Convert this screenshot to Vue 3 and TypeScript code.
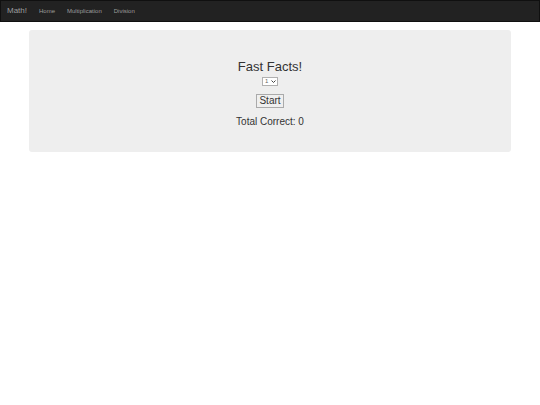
<script setup lang="ts">
import { ref } from 'vue'

const links: string[] = ['Home', 'Multiplication', 'Division']
const numbers: number[] = Array.from({ length: 12 }, (_, i) => i + 1)

const selected = ref<number>(1)
const totalCorrect = ref<number>(0)

function start(): void {
  totalCorrect.value = 0
}
</script>

<template>
  <nav class="navbar">
    <a class="brand" href="#">Math!</a>
    <ul class="links">
      <li v-for="link in links" :key="link">
        <a href="#">{{ link }}</a>
      </li>
    </ul>
  </nav>
  <main class="container">
    <section class="jumbotron">
      <h1 class="title">Fast Facts!</h1>
      <div class="picker">
        <select v-model="selected" aria-label="Number">
          <option v-for="n in numbers" :key="n" :value="n">{{ n }}</option>
        </select>
        <svg class="chevron" viewBox="0 0 10 6" aria-hidden="true">
          <path d="M1 1l4 4 4-4" fill="none" stroke="#444" stroke-width="2" />
        </svg>
      </div>
      <button class="start" type="button" @click="start">Start</button>
      <p class="score">Total Correct: {{ totalCorrect }}</p>
    </section>
  </main>
</template>

<style>
body {
  margin: 0;
  background: #fff;
}
</style>

<style scoped>
.navbar,
.container {
  font-family: "Liberation Sans", Arial, sans-serif;
  box-sizing: border-box;
}

.navbar {
  display: flex;
  align-items: center;
  gap: 12px;
  height: 22px;
  padding: 0 6px;
  background: #222;
  border: 1px solid #101010;
}

.navbar a {
  color: #9d9d9d;
  text-decoration: none;
}

.brand {
  font-size: 8px;
  line-height: 10px;
}

.links {
  display: flex;
  gap: 12px;
  margin: 0;
  padding: 0;
  list-style: none;
  font-size: 6px;
  line-height: 10px;
}

.links li {
  display: flex;
}

.container {
  padding: 8px 29px;
}

.jumbotron {
  display: flex;
  flex-direction: column;
  align-items: center;
  padding: 29px 24px 24px;
  background: #eee;
  border-radius: 3px;
  color: #333;
}

.title {
  margin: 0 0 3px;
  font-size: 13px;
  font-weight: 400;
  line-height: 15px;
}

.picker {
  position: relative;
  display: flex;
  margin-bottom: 8px;
}

.picker select {
  appearance: none;
  box-sizing: border-box;
  width: 16px;
  height: 9px;
  margin: 0;
  padding: 0 0 0 2px;
  background: #fff;
  border: 1px solid #b0b0b0;
  border-radius: 0;
  color: #666;
  font-family: inherit;
  font-size: 6px;
  line-height: 7px;
}

.chevron {
  position: absolute;
  top: 3px;
  right: 2px;
  width: 5px;
  height: 3px;
  pointer-events: none;
}

.start {
  box-sizing: border-box;
  height: 14px;
  margin: 0 0 8px;
  padding: 0 2px;
  background: #efefef;
  border: 1px solid #aaa;
  border-radius: 0;
  color: #333;
  font-family: inherit;
  font-size: 10px;
  line-height: 12px;
}

.score {
  margin: 0;
  font-size: 10px;
  line-height: 12px;
}
</style>
